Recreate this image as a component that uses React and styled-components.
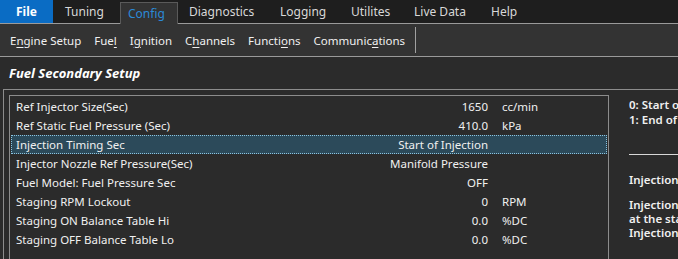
import React from "react";
import styled, { createGlobalStyle } from "styled-components";

const GlobalStyle = createGlobalStyle`
  html, body {
    margin: 0;
    padding: 0;
    background: #2b2b2b;
    overflow: hidden;
  }
  body {
    font-family: "Noto Sans", "Open Sans", sans-serif;
    font-size: 11.5px;
    color: #f0f0f0;
  }
`;

const Page = styled.div`
  width: 678px;
  height: 259px;
  display: flex;
  flex-direction: column;
  background: #2b2b2b;
  overflow: hidden;
`;

const TabBar = styled.div`
  height: 24px;
  display: flex;
  align-items: stretch;
  background: #1e1e1e;
  border-bottom: 1px solid #9a9a9a;
  box-sizing: border-box;
`;

const Tab = styled.div`
  display: flex;
  align-items: center;
  justify-content: ${(p) => (p.$file ? "center" : "flex-start")};
  width: ${(p) => p.$w}px;
  padding-left: ${(p) => p.$pad || 0}px;
  box-sizing: border-box;
  font-size: 12px;
  color: ${(p) => (p.$active ? "#2b8ad8" : p.$file ? "#ffffff" : "#d8d8d8")};
  background: ${(p) => (p.$file ? "#0a6cc4" : p.$active ? "#333333" : "transparent")};
  font-weight: ${(p) => (p.$file ? 700 : 400)};
  margin-top: ${(p) => (p.$active ? 2 : 0)}px;
  margin-bottom: ${(p) => (p.$active ? -1 : 0)}px;
  border: ${(p) => (p.$active ? "1px solid #5a5a5a" : "none")};
  border-bottom: none;
`;

const MenuBar = styled.div`
  height: 33px;
  display: flex;
  align-items: center;
  background: #333333;
  border-bottom: 1px solid #9a9a9a;
  box-sizing: border-box;
  padding-left: 10px;
`;

const MenuItem = styled.span`
  color: #f0f0f0;
  margin-right: ${(p) => p.$gap}px;
  white-space: nowrap;
  u {
    text-underline-offset: 2px;
  }
`;

const Separator = styled.div`
  width: 1px;
  height: 26px;
  background: #a0a0a0;
`;

const Title = styled.div`
  height: 32px;
  display: flex;
  align-items: center;
  padding-left: 9px;
  font-style: italic;
  font-weight: 700;
  font-size: 13px;
  color: #ffffff;
`;

const Frame = styled.div`
  flex: 1;
  margin-left: 3px;
  border-top: 1px solid #8c8c8c;
  border-left: 1px solid #8c8c8c;
  padding: 5px 0 0 5px;
  display: flex;
  align-items: flex-start;
  min-height: 0;
`;

const ListBox = styled.div`
  width: 600px;
  flex: none;
  height: 200px;
  border: 1px solid #8c8c8c;
  padding: 1px 0 0 1px;
  box-sizing: border-box;
`;

const Row = styled.div`
  height: 19px;
  display: flex;
  align-items: center;
  padding-left: 5px;
  box-sizing: border-box;
  background: ${(p) => (p.$selected ? "#2c4a5a" : "transparent")};
  outline: ${(p) => (p.$selected ? "1px dotted #8cc4e0" : "none")};
  outline-offset: -1px;
  margin-right: 1px;
`;

const Label = styled.span`
  flex: 1;
  white-space: nowrap;
`;

const Value = styled.span`
  text-align: right;
  white-space: nowrap;
`;

const Unit = styled.span`
  width: 119px;
  padding-left: 14px;
  box-sizing: border-box;
  white-space: nowrap;
`;

const Help = styled.div`
  flex: 1;
  min-width: 0;
  overflow: hidden;
  padding: 2px 0 0 20px;
  font-weight: 600;
  white-space: nowrap;
  line-height: 15px;
`;

const HelpRule = styled.div`
  width: 60px;
  height: 1px;
  background: #d8d8d8;
  margin: 27px 0 17px;
`;

const HelpHead = styled.div`
  margin-bottom: 11px;
`;

const HelpText = styled.div`
  line-height: 14px;
`;

const tabs = [
  { name: "File", file: true, w: 53 },
  { name: "Tuning", w: 67, pad: 12 },
  { name: "Config", active: true, w: 58, pad: 7 },
  { name: "Diagnostics", w: 90, pad: 11 },
  { name: "Logging", w: 71, pad: 12 },
  { name: "Utilites", w: 63, pad: 12 },
  { name: "Live Data", w: 77, pad: 12 },
  { name: "Help", w: 51, pad: 12 },
];

const menu = [
  { pre: "E", u: "n", post: "gine Setup", gap: 13 },
  { pre: "Fue", u: "l", post: "", gap: 13 },
  { pre: "I", u: "g", post: "nition", gap: 13 },
  { pre: "C", u: "h", post: "annels", gap: 13 },
  { pre: "Functi", u: "o", post: "ns", gap: 13 },
  { pre: "Communic", u: "a", post: "tions", gap: 10 },
];

const rows = [
  { label: "Ref Injector Size(Sec)", value: "1650", unit: "cc/min" },
  { label: "Ref Static Fuel Pressure (Sec)", value: "410.0", unit: "kPa" },
  { label: "Injection Timing Sec", value: "Start of Injection", unit: "", selected: true },
  { label: "Injector Nozzle Ref Pressure(Sec)", value: "Manifold Pressure", unit: "" },
  { label: "Fuel Model: Fuel Pressure Sec", value: "OFF", unit: "" },
  { label: "Staging RPM Lockout", value: "0", unit: "RPM" },
  { label: "Staging ON Balance Table Hi", value: "0.0", unit: "%DC" },
  { label: "Staging OFF Balance Table Lo", value: "0.0", unit: "%DC" },
];

export default function App() {
  return (
    <>
      <GlobalStyle />
      <Page>
        <TabBar>
          {tabs.map((t) => (
            <Tab key={t.name} $file={t.file} $active={t.active} $pad={t.pad} $w={t.w}>
              {t.name}
            </Tab>
          ))}
        </TabBar>
        <MenuBar>
          {menu.map((m) => (
            <MenuItem key={m.pre} $gap={m.gap}>
              {m.pre}
              <u>{m.u}</u>
              {m.post}
            </MenuItem>
          ))}
          <Separator />
        </MenuBar>
        <Title>Fuel Secondary Setup</Title>
        <Frame>
          <ListBox>
            {rows.map((r) => (
              <Row key={r.label} $selected={r.selected}>
                <Label>{r.label}</Label>
                <Value>{r.value}</Value>
                <Unit>{r.unit}</Unit>
              </Row>
            ))}
          </ListBox>
          <Help>
            <div>0: Start of Injection</div>
            <div>1: End of Injection</div>
            <HelpRule />
            <HelpHead>Injection Timing Sec</HelpHead>
            <HelpText>
              <div>Injection timing reference point</div>
              <div>at the start or end of the</div>
              <div>Injection event.</div>
            </HelpText>
          </Help>
        </Frame>
      </Page>
    </>
  );
}
